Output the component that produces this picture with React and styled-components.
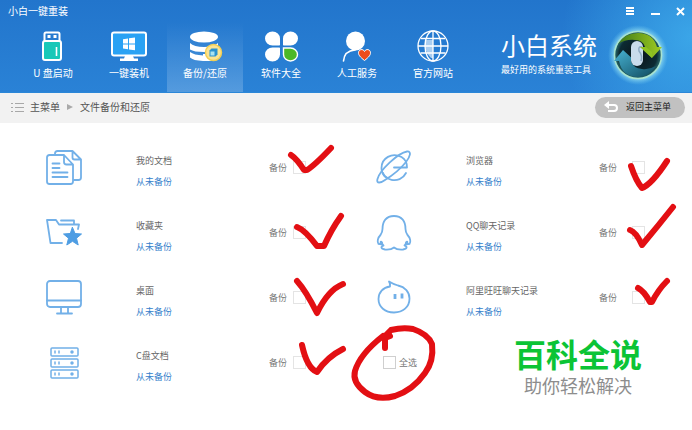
import React from "react"
import styled, { createGlobalStyle } from "styled-components"

const GlobalStyle = createGlobalStyle`
  * {
    box-sizing: border-box;
  }

  body {
    margin: 0;
    background: #fff;
    font-family: "Noto Sans CJK SC", "Liberation Sans", sans-serif;
    font-size: 9px;
    line-height: 16px;
    color: #777;
  }

  a {
    color: inherit;
    text-decoration: none;
  }

  button {
    padding: 0;
    border: 0;
    background: none;
    font: inherit;
    color: inherit;
    cursor: pointer;
  }

  svg {
    display: block;
    flex: none;
  }
`

const Header = styled.header`
  color: #fff;
  background:
    radial-gradient(circle at 100% 40%, rgba(66, 180, 240, 0.75), rgba(66, 180, 240, 0) 130px),
    linear-gradient(#2275cc, #2a82d6);
  border-bottom: 1px solid #2b87d8;
`

const TitleBar = styled.div`
  display: flex;
  justify-content: space-between;
  align-items: center;
  height: 22px;
  padding: 0 7px 0 8px;
`

const AppTitle = styled.h1`
  margin: 0;
  font-size: 10px;
  font-weight: 400;
`

const WindowControls = styled.div`
  display: flex;
  gap: 13px;
`

const WindowButton = styled.button`
  width: 12px;
  height: 12px;
`

const HeaderMain = styled.div`
  display: flex;
  justify-content: space-between;
`

const Nav = styled.nav`
  display: flex;
  padding-left: 15px;
`

const Tab = styled.a`
  display: flex;
  flex-direction: column;
  align-items: center;
  gap: 1px;
  width: 76px;
  height: 70px;
  padding-top: 8px;
  font-size: 10px;
  background: ${({ $active }) =>
    $active
      ? "linear-gradient(rgba(255, 255, 255, 0), rgba(255, 255, 255, 0.2))"
      : "none"};
`

const Brand = styled.div`
  display: flex;
  align-items: center;
  gap: 11px;
  padding: 0 24px 4px 0;
`

const BrandName = styled.p`
  margin: 0;
  font-size: 24px;
  font-weight: 400;
  line-height: 30px;
`

const Tagline = styled.p`
  margin: 0;
  font-size: 9px;
  line-height: 20px;
`

const Breadcrumb = styled.div`
  display: flex;
  align-items: center;
  justify-content: space-between;
  height: 30px;
  padding: 0 7px 2px 11px;
  background: #f2f2f2;
`

const Trail = styled.div`
  display: flex;
  align-items: center;
  gap: 6px;
  font-size: 10px;
  color: #555;
`

const BackButton = styled.button`
  display: flex;
  align-items: center;
  gap: 7px;
  height: 21px;
  padding: 0 14px 0 9px;
  border-radius: 11px;
  background: #c1c1c1;
  color: #222;
`

const BackupGrid = styled.main`
  display: grid;
  grid-template-columns: 1fr 1fr;
  grid-auto-rows: 65px;
  padding: 12px 0 24px 32px;
`

const Item = styled.section`
  display: grid;
  grid-template-columns: 90px 1fr 93px;
  align-items: center;
  padding-left: 14px;
`

const ItemText = styled.div`
  padding-top: 6px;
  line-height: 21px;
`

const ItemName = styled.h2`
  margin: 0;
  font-size: 9px;
  font-weight: 400;
  color: #666;
`

const Status = styled.a`
  color: #3580cb;
`

const Check = styled.label`
  display: flex;
  align-items: center;
  gap: ${({ $wide }) => ($wide ? 15 : 6)}px;
`

const BoxWrap = styled.span`
  position: relative;
  display: block;
  width: 13px;
  height: 13px;
`

const Box = styled.input`
  display: block;
  appearance: none;
  width: 13px;
  height: 13px;
  margin: 0;
  border: 1px solid ${({ $strong }) => ($strong ? "#cfcfcf" : "#e4e4e4")};
  background: #fff;
`

// pen strokes lie over the boxes, origin at the box corner
const Ink = styled.svg`
  position: absolute;
  top: 0;
  left: 0;
  width: 13px;
  height: 13px;
  overflow: visible;
  pointer-events: none;
  fill: none;
  stroke: #e30f13;
  stroke-width: 6;
  stroke-linecap: round;
  stroke-linejoin: round;
`

const LastCell = styled.section`
  display: flex;
  justify-content: space-between;
  padding: 0 50px 0 21px;
`

const SelectAll = styled.label`
  display: flex;
  align-items: center;
  gap: 3px;
`

const Watermark = styled.div`
  padding-top: 7px;
  font-family: "Liberation Sans", "Noto Sans CJK SC", sans-serif;
  text-align: center;
`

const WatermarkTitle = styled.p`
  margin: 0;
  font-size: 32px;
  font-weight: 700;
  line-height: 38px;
  color: #0bc435;
`

const WatermarkSub = styled.p`
  margin: 0;
  font-size: 18px;
  line-height: 24px;
  color: #8d8d8d;
`

const TabSvg = ({ children }) => (
  <svg width="40" height="34" viewBox="0 0 40 34" aria-hidden="true">
    {children}
  </svg>
)

const UsbIcon = () => (
  <TabSvg>
    <path d="M11.5 11V4Q11.5 2.5 13 2.5H25Q26.5 2.5 26.5 4V11" fill="none" stroke="#fff" strokeWidth="2" />
    <rect x="14.5" y="5" width="3" height="3" fill="#fff" />
    <rect x="20.5" y="5" width="3" height="3" fill="#fff" />
    <rect x="10" y="11" width="18" height="19" rx="2" fill="#18c8b8" stroke="#fff" strokeWidth="2" />
    <path d="M23.5 17V26" stroke="#fff" strokeWidth="1.6" />
  </TabSvg>
)

const InstallIcon = () => (
  <TabSvg>
    <rect x="3" y="2.5" width="34" height="23" rx="2" fill="#2aa2f4" stroke="#fff" strokeWidth="2" />
    <path d="M16 26H24L25 28.5H29V31H11V28.5H15Z" fill="#fff" />
    <path d="M14 9.2 19 8.5V13.5H14ZM20 8.3 26 7.5V13.5H20ZM14 14.5H19V19.3L14 18.6ZM20 14.5H26V20.3L20 19.5Z" fill="#fff" />
  </TabSvg>
)

const BackupIcon = () => (
  <TabSvg>
    <ellipse cx="19" cy="7" rx="14" ry="5.5" fill="#fff" />
    <path d="M5 13Q9 17 19 17Q29 17 33 13V18Q29 22 19 22Q9 22 5 19.5Z" fill="#fff" />
    <path d="M5 22Q9 25 18 25.5V31Q8 30.5 5 27.5Z" fill="#fff" />
    <path d="M18 24H26V31H18Z" fill="#fff" />
    <circle cx="28.5" cy="22.5" r="8" fill="#fbe493" stroke="#f2cf55" strokeWidth="1.5" />
    <path d="M24.5 20.5 26.5 18.5H32.5V24.5L30.5 26.5H24.5Z" fill="#2c93cf" />
    <path d="M25.5 21.5H29.5V25.5H25.5Z" fill="#a8e3f1" />
  </TabSvg>
)

const AppsIcon = () => (
  <TabSvg>
    <path d="M19 15V8.5A7.5 7 0 1 0 11.5 15.5H18.5Z" fill="#fff" />
    <path d="M22 15V8.5A7.5 7 0 1 1 29.5 15.5H22.5Z" fill="#fff" />
    <path d="M19 18V24.5A7.5 7 0 1 1 11.5 17.5H18.5Z" fill="#fff" />
    <path d="M22.5 18H29.5A7 6.5 0 1 1 22.5 24.5Z" fill="#4bb828" stroke="#fff" strokeWidth="1.4" />
  </TabSvg>
)

const ServiceIcon = () => (
  <TabSvg>
    <circle cx="18.5" cy="11" r="9.5" fill="#fff" />
    <path d="M6.5 31C7 25 10.5 20.5 18 20" fill="none" stroke="#fff" strokeWidth="1.6" strokeLinecap="round" />
    <path d="M27.5 30.5C23 27 21.5 25 21.5 22.8C21.5 19.3 26 18.3 27.5 21.5C29 18.3 33.5 19.3 33.5 22.8C33.5 25 32 27 27.5 30.5Z" fill="#ee4c1c" stroke="#fff" strokeWidth="1" />
  </TabSvg>
)

const WebsiteIcon = () => (
  <TabSvg>
    <g fill="none" stroke="#fff" strokeWidth="1.3">
      <path d="M12 10H20V28H18Q10 20 12 10Z" fill="#a9cdf0" stroke="none" />
      <circle cx="20" cy="16" r="15" />
      <ellipse cx="20" cy="16" rx="8" ry="15" />
      <path d="M20 1V31M5 16H35M8 8.5H32M7.5 23H32.5" />
    </g>
  </TabSvg>
)

const ListIcon = () => (
  <svg width="13" height="10" viewBox="0 0 13 10" stroke="#a8a8a8" aria-hidden="true">
    <path d="M0 1.5H2M4 1.5H13M0 5.5H2M4 5.5H13M0 9.5H2M4 9.5H13" />
  </svg>
)

const LogoIcon = () => (
  <svg width="60" height="60" viewBox="0 0 60 60" aria-hidden="true">
    <defs>
      <radialGradient id="halo">
        <stop offset="0.75" stopColor="#a7e8ef" stopOpacity="0.9" />
        <stop offset="1" stopColor="#6cc8f0" stopOpacity="0" />
      </radialGradient>
      <radialGradient id="disc">
        <stop offset="0.3" stopColor="#0b1c22" />
        <stop offset="0.8" stopColor="#0c2b33" />
        <stop offset="1" stopColor="#2c6f70" />
      </radialGradient>
      <linearGradient id="green" x1="0" y1="0" x2="1" y2="0">
        <stop offset="0" stopColor="#3f7a17" />
        <stop offset="1" stopColor="#a0cc22" />
      </linearGradient>
      <linearGradient id="blue" x1="0" y1="0" x2="1" y2="1">
        <stop offset="0" stopColor="#48b4d4" />
        <stop offset="1" stopColor="#0f4a5e" />
      </linearGradient>
    </defs>
    <circle cx="30" cy="30" r="30" fill="url(#halo)" />
    <circle cx="30" cy="30" r="23.5" fill="url(#disc)" stroke="#a9e3cf" strokeWidth="1.5" />
    <path d="M10 19Q17 8 30 8Q45 8 49 22H54L44 33L32 22H37Q35 15 27 15Q18 14 10 19Z" fill="url(#green)" />
    <path d="M15 25 27 36H23Q25 43 34 44Q41 45 48 41Q42 51 31 52Q14 52 11 36H6Z" fill="url(#blue)" />
    <rect x="23" y="16" width="12" height="25" rx="6" fill="#c9dcec" />
    <path d="M34 22Q30 21 31 26Q35 31 33 36" fill="none" stroke="#8fabc4" strokeWidth="1.5" />
    <path d="M32 22H38L44 27V33Z" fill="#8fc222" />
  </svg>
)

const ItemSvg = ({ children }) => (
  <svg
    width="36"
    height="36"
    viewBox="0 0 36 36"
    fill="none"
    stroke="#72b0e8"
    strokeWidth="1.8"
    strokeLinejoin="round"
    strokeLinecap="round"
    aria-hidden="true"
  >
    {children}
  </svg>
)

const DocsIcon = () => (
  <ItemSvg>
    <path d="M18 5H3.5Q1 5 1 7.5V31.5Q1 34 3.5 34H24.5Q27 34 27 31.5V14.5ZM18 5V12Q18 14.5 20.5 14.5H27" />
    <path d="M9 4.5V3.5Q9 1 11.5 1H26.5L35 9.5V27.5Q35 30 32.5 30H28M26.5 1V7.5Q26.5 9.5 28.5 9.5H35" />
    <path d="M6.5 13.5H13.5M6.5 18H13.5M6.5 22.5H21.5M6.5 27H21.5" />
  </ItemSvg>
)

const FolderIcon = () => (
  <ItemSvg>
    <path d="M16 28H4.5L1 5H10L13 9.5H33L32 14" />
    <path d="M15 5.5H28V9" />
    <path d="M26.5 12.5 29 18.5 35.5 19 30.5 23.2 32.2 30 26.5 26.3 20.8 30 22.5 23.2 17.5 19 24 18.5Z" fill="#4e9de3" stroke="#4e9de3" strokeWidth="1" />
  </ItemSvg>
)

const DesktopIcon = () => (
  <ItemSvg>
    <rect x="1" y="1" width="34" height="26" rx="3" />
    <path d="M1 20.5H35M15 27V33M22 27V33M11 33.5H26" />
  </ItemSvg>
)

const DiskIcon = () => (
  <ItemSvg>
    {[3, 14, 25].map(y => (
      <g key={y} strokeWidth="1.5">
        <rect x="5" y={y} width="27" height="8" rx="1" />
        <path d={`M9 ${y + 3}v2M13 ${y + 3}v2`} />
        <circle cx="26" cy={y + 4} r="1" fill="#4e9de3" />
      </g>
    ))}
  </ItemSvg>
)

const BrowserIcon = () => (
  <ItemSvg>
    <path d="M18 17.5H31Q31 10 25.5 7C16 2 5.5 8 5.5 18C5.5 31 24 35 30 23" />
    <path d="M9 30C5 33 0 34 1.5 29C4 20 22 3 31 1.5C36 1 34 7 30 12Q22 22 9 30ZM7 23Q8 27 12 28" />
  </ItemSvg>
)

const QqIcon = () => (
  <ItemSvg>
    <path d="M18 1C10 1 6.5 6.5 6.5 14Q6.5 17 4.5 20C1.5 23 1 27 2.5 29Q4 29.5 6 27.5Q6 29 7.5 30.5C4.5 31 4.5 34 9 34.5Q15 35 18 32.5Q21 35 27 34.5C31.5 34 31.5 31 28.5 30.5Q30 29 30 27.5Q32 29.5 33.5 29C35 27 34.5 23 31.5 20Q29.5 17 29.5 14C29.5 6.5 26 1 18 1Z" />
    <path d="M5 27V29M31 27V29" strokeWidth="2.5" />
  </ItemSvg>
)

const WangwangIcon = () => (
  <ItemSvg>
    <path d="M14 6.5Q14.5 4 13 1.5Q17 4 22 5.5C29 7 33.5 12 33.5 18.5C33.5 27 27 32.5 18 32.5C9 32.5 2.5 27 2.5 19C2.5 12.5 7 7.5 14 6.5" />
    <path d="M19 14V19M26 13.5V18.5" strokeWidth="2.8" strokeLinecap="butt" />
  </ItemSvg>
)

const tabs = [
  { label: "U 盘启动", Icon: UsbIcon },
  { label: "一键装机", Icon: InstallIcon },
  { label: "备份/还原", Icon: BackupIcon, active: true },
  { label: "软件大全", Icon: AppsIcon },
  { label: "人工服务", Icon: ServiceIcon },
  { label: "官方网站", Icon: WebsiteIcon },
]

const items = [
  { name: "我的文档", Icon: DocsIcon, ink: "M-2-6Q4-2 11 9H14Q22 4 38-13" },
  { name: "浏览器", Icon: BrowserIcon, ink: "M-1 5Q4 20 10 27Q20 23 35 0", wide: true },
  { name: "收藏夹", Icon: FolderIcon, ink: "M4 1Q12 4 24 20H31Q38 4 48-10" },
  { name: "QQ聊天记录", Icon: QqIcon, ink: "M-2 4Q4 6 10 19Q26 0 41-19", wide: true },
  { name: "桌面", Icon: DesktopIcon, ink: "M4-10Q13 0 24 22Q35-1 50-7" },
  { name: "阿里旺旺聊天记录", Icon: WangwangIcon, ink: "M6-3Q12 0 18 11H20Q26-1 35-10", wide: true },
  { name: "C盘文档", Icon: DiskIcon, ink: "M9-11Q14 12 24 16Q34 1 50-7" },
]

const circleInk =
  "M7-20 2-18V-8M2-20L8-26Q20-29 30-27Q45-22 49-12Q51 5 42 17Q30 34 12 40Q-6 45-18 36Q-31 26-28 15Q-23-2 0-20"

const App = () => (
  <>
    <GlobalStyle />
    <Header>
      <TitleBar>
        <AppTitle>小白一键重装</AppTitle>
        <WindowControls>
          <WindowButton aria-label="菜单">
            <svg width="12" height="12" viewBox="0 0 12 12" stroke="#fff" strokeWidth="2">
              <path d="M3 3H11M3 6H11M3 9H11" />
            </svg>
          </WindowButton>
          <WindowButton aria-label="最小化">
            <svg width="12" height="12" viewBox="0 0 12 12" stroke="#fff" strokeWidth="2">
              <path d="M3 9H12" />
            </svg>
          </WindowButton>
          <WindowButton aria-label="关闭">
            <svg width="12" height="12" viewBox="0 0 12 12" stroke="#fff" strokeWidth="2">
              <path d="M4 3 11 10M11 3 4 10" />
            </svg>
          </WindowButton>
        </WindowControls>
      </TitleBar>
      <HeaderMain>
        <Nav>
          {tabs.map(({ label, Icon, active }) => (
            <Tab href="#" key={label} $active={active}>
              <Icon />
              {label}
            </Tab>
          ))}
        </Nav>
        <Brand>
          <div>
            <BrandName>小白系统</BrandName>
            <Tagline>最好用的系统重装工具</Tagline>
          </div>
          <LogoIcon />
        </Brand>
      </HeaderMain>
    </Header>

    <Breadcrumb>
      <Trail>
        <ListIcon />
        <a href="#">主菜单</a>
        <svg width="8" height="8" viewBox="0 0 8 8" fill="#aaa" aria-hidden="true">
          <path d="M1 1 7 4 1 7Z" />
        </svg>
        <span>文件备份和还原</span>
      </Trail>
      <BackButton>
        <svg width="15" height="12" viewBox="0 0 15 12" aria-hidden="true">
          <path d="M0 4 5 0V8Z" fill="#fff" />
          <path d="M4 4H10Q13 4 13 7Q13 10 10 10H4" fill="none" stroke="#fff" strokeWidth="2" />
        </svg>
        返回主菜单
      </BackButton>
    </Breadcrumb>

    <BackupGrid>
      {items.map(({ name, Icon, ink, wide }) => (
        <Item key={name}>
          <Icon />
          <ItemText>
            <ItemName>{name}</ItemName>
            <Status href="#">从未备份</Status>
          </ItemText>
          <Check $wide={wide}>
            备份
            <BoxWrap>
              <Box type="checkbox" />
              <Ink viewBox="0 0 13 13" aria-hidden="true">
                <path d={ink} />
              </Ink>
            </BoxWrap>
          </Check>
        </Item>
      ))}
      <LastCell>
        <SelectAll>
          <BoxWrap>
            <Box type="checkbox" $strong />
            <Ink viewBox="0 0 13 13" aria-hidden="true">
              <path d={circleInk} />
            </Ink>
          </BoxWrap>
          全选
        </SelectAll>
        <Watermark>
          <WatermarkTitle>百科全说</WatermarkTitle>
          <WatermarkSub>助你轻松解决</WatermarkSub>
        </Watermark>
      </LastCell>
    </BackupGrid>
  </>
)

export default App
